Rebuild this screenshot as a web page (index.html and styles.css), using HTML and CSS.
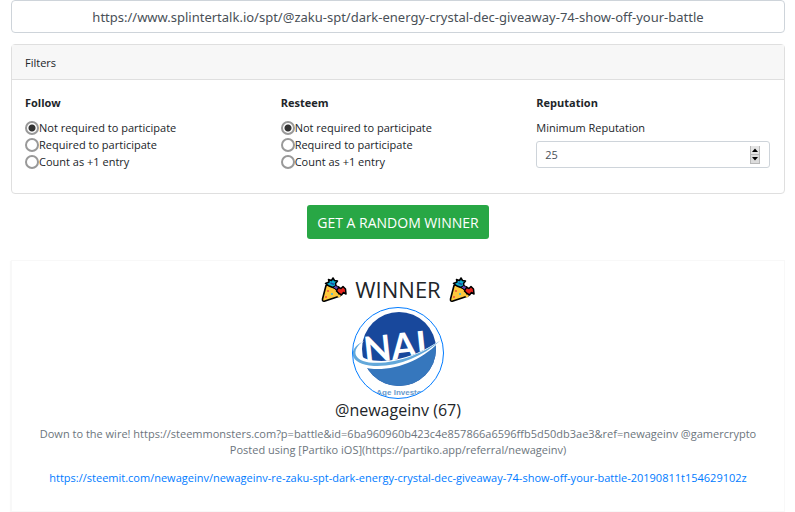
FILE: index.html
```html
<!DOCTYPE html>
<html lang="en">
<head>
<meta charset="utf-8">
<meta name="viewport" content="width=device-width, initial-scale=1">
<title>Random Winner</title>
<link rel="stylesheet" href="styles.css">
</head>
<body>
<svg class="defs" width="0" height="0" aria-hidden="true">
    <symbol id="popper" viewBox="0 0 26 26">
        <path d="M5 8.500 L1.500 22 Q1 25 4 24 L19 19 Q17 12 11 9.500 Q7 7.500 5 8.500Z" fill="#ffc83d" stroke="#000" stroke-width="1.600" stroke-linejoin="round"/>
        <path d="M8 9 L4.500 6.500 L8 5 L7.500 2.500 L10.500 3.500 L12 1 L13.500 3.500 L16.500 4 L14.500 6.500 L15 9 L12 10.500Z" fill="#0cadcf" stroke="#000" stroke-width="1.500" stroke-linejoin="round"/>
        <path d="M9.500 6 L13 7.500" stroke="#1d4fa0" stroke-width="1.500"/>
        <path d="M12 10.500 L14.500 8.500 L18.500 10 L16.500 13.500Z" fill="#5b45b0" stroke="#000" stroke-width="1"/>
        <path d="M15.500 14 L17.500 10.500 L20 11.500 L22 9.500 L24.500 12 L25 17 L22.500 15.500 L20.500 18 L18 16.500Z" fill="#e8251e" stroke="#000" stroke-width="1.500" stroke-linejoin="round"/>
        <circle cx="18" cy="19" r="1.500" fill="#ffc83d"/>
        <circle cx="7" cy="14" r="1" fill="#f0533f"/>
        <circle cx="11" cy="17" r="1" fill="#37b6e6"/>
        <circle cx="5" cy="20" r="1" fill="#f0533f"/>
    </symbol>
</svg>
<main>
<form>
<input class="url" type="text" name="url" aria-label="Post URL" value="https://www.splintertalk.io/spt/@zaku-spt/dark-energy-crystal-dec-giveaway-74-show-off-your-battle">

<section class="card">
    <header>Filters</header>
    <div class="filters">
        <fieldset>
            <legend>Follow</legend>
            <label><input type="radio" name="follow" checked>Not required to participate</label>
            <label><input type="radio" name="follow">Required to participate</label>
            <label><input type="radio" name="follow">Count as +1 entry</label>
        </fieldset>
        <fieldset>
            <legend>Resteem</legend>
            <label><input type="radio" name="resteem" checked>Not required to participate</label>
            <label><input type="radio" name="resteem">Required to participate</label>
            <label><input type="radio" name="resteem">Count as +1 entry</label>
        </fieldset>
        <fieldset>
            <legend>Reputation</legend>
            <label for="rep">Minimum Reputation</label>
            <div class="number">
                <input type="number" id="rep" name="rep" value="25">
                <svg class="spin" viewBox="0 0 10 18" aria-hidden="true">
                    <rect width="10" height="18" fill="#b8b8b8"/>
                    <rect x="1" y="0" width="8" height="8" fill="#e4e4e4"/>
                    <rect x="1" y="9" width="8" height="8" fill="#dcdcdc"/>
                    <path d="M2 6 L5 2.500 L8 6Z M2 11 L5 14.500 L8 11Z" fill="#000"/>
                </svg>
            </div>
        </fieldset>
    </div>
</section>

<button type="button" class="draw">GET A RANDOM WINNER</button>
</form>

<section class="winner">
    <h2><svg class="emoji"><use href="#popper"/></svg> WINNER <svg class="emoji"><use href="#popper"/></svg></h2>
    <svg class="avatar" viewBox="0 0 92 92" role="img" aria-label="newageinv">
        <defs>
            <clipPath id="round"><circle cx="46" cy="46" r="45"/></clipPath>
            <clipPath id="globe"><circle cx="47" cy="42" r="37"/></clipPath>
        </defs>
        <circle cx="46" cy="46" r="46" fill="#fff"/>
        <g clip-path="url(#round)">
            <circle cx="47" cy="42" r="37" fill="#18489c"/>
            <text class="logo" x="13" y="56" transform="rotate(-6 13 56)">NAI</text>
            <path clip-path="url(#globe)" d="M0 54 Q24 58 48 52 Q70 46 92 31 V92 H0Z" fill="#3677bd"/>
            <path d="M12 34 C2 43 6 52 22 53.500 C46 56 70 46 90 32 C72 52 47 63 22 62 C-4 60 -5 42 12 34Z" fill="#fff"/>
            <path d="M10 35 C-1 44 2 53 17 55.500 C43 58 70 47 89 33 C70 50 46 60 22 59 C-4 57 -4 42 10 35Z" fill="#63a8da"/>
            <text class="caption" x="47" y="88" text-anchor="middle">Age Investo</text>
        </g>
        <circle cx="46" cy="46" r="45.500" fill="none" stroke="#007bff"/>
    </svg>
    <h3>@newageinv (67)</h3>
    <p>Down to the wire! https://steemmonsters.com?p=battle&amp;id=6ba960960b423c4e857866a6596ffb5d50db3ae3&amp;ref=newageinv @gamercrypto<br>
    Posted using [Partiko iOS](https://partiko.app/referral/newageinv)</p>
    <a href="#">https://steemit.com/newageinv/newageinv-re-zaku-spt-dark-energy-crystal-dec-giveaway-74-show-off-your-battle-20190811t154629102z</a>
</section>
</main>
</body>
</html>
```
FILE: styles.css
```css
* {
    box-sizing: border-box;
}
body {
    margin: 0;
    color: #212529;
    background-color: #fff;
    font: 11px/17px "Open Sans", "Noto Sans", sans-serif;
}
main {
    padding: 0 10px 0 11px;
}
h2,h3,p,fieldset,legend {
    margin: 0;
    padding: 0;
}
input,
button {
    font-family: inherit;
}
.defs {
    position: absolute;
}
.url {
    display: block;
    width: 100%;
    height: 33px;
    padding: 0 12px;
    color: #495057;
    font-family: "Noto Sans", sans-serif;
    font-size: 13px;
    text-align: center;
    border: 1px #ced4da solid;
    border-radius: 4px;
}
.card {
    margin-top: 11px;
    border: 1px #dfdfdf solid;
    border-radius: 4px;
}
.card header {
    padding: 9px 13px 8px;
    background-color: #f7f7f7;
    border-bottom: 1px #dfdfdf solid;
}
.filters {
    display: grid;
    grid-template-columns: repeat(3, 1fr);
    gap: 22px;
    padding: 14px 14px 23px 13px;
}
fieldset {
    min-width: 0;
    border: 0;
}
legend {
    margin-bottom: 8px;
    font-weight: bold;
}
label {
    display: flex;
    align-items: center;
}
[type=radio] {
    appearance: none;
    width: 14px;
    height: 14px;
    margin: 0;
    border: 2px #999 solid;
    border-radius: 50%;
}
[type=radio]:checked {
    background: radial-gradient(circle, #333 3px, #fff 4px);
}
.number {
    position: relative;
    margin-top: 5px;
}
.number input {
    appearance: textfield;
    display: block;
    width: 100%;
    height: 27px;
    padding: 0 8px;
    color: #495057;
    font-size: 11px;
    border: 1px #ced4da solid;
    border-radius: 3px;
}
.spin {
    position: absolute;
    top: 5px;
    right: 10px;
    width: 10px;
    height: 18px;
    pointer-events: none;
}
.draw {
    display: block;
    height: 34px;
    margin: 11px auto 21px;
    padding: 0 10px;
    color: #fff;
    font-size: 14px;
    background-color: #28a745;
    border: 0;
    border-radius: 3px;
}
.winner {
    padding: 13px 12px 25px;
    text-align: center;
    border: 1px #f8f8f8 solid;
    box-shadow: -1px 1px 1px #f8f8f8;
}
h2 {
    display: flex;
    justify-content: center;
    align-items: center;
    gap: 8px;
    margin-bottom: 2px;
    font-size: 22px;
    font-weight: normal;
    line-height: 31px;
}
.emoji {
    width: 26px;
    height: 26px;
}
.avatar {
    display: block;
    width: 92px;
    height: 92px;
    margin: 0 auto;
}
.logo {
    fill: #fff;
    font: bold 36px Lato, sans-serif;
}
.caption {
    fill: #6a9bcc;
    font: bold 8px "Liberation Sans", sans-serif;
}
h3 {
    font-size: 16px;
    font-weight: normal;
    line-height: 22px;
}
p {
    margin: 5px 0 11px;
    color: #6c757d;
    line-height: 16px;
}
a {
    color: #007bff;
    text-decoration: none;
}
```
